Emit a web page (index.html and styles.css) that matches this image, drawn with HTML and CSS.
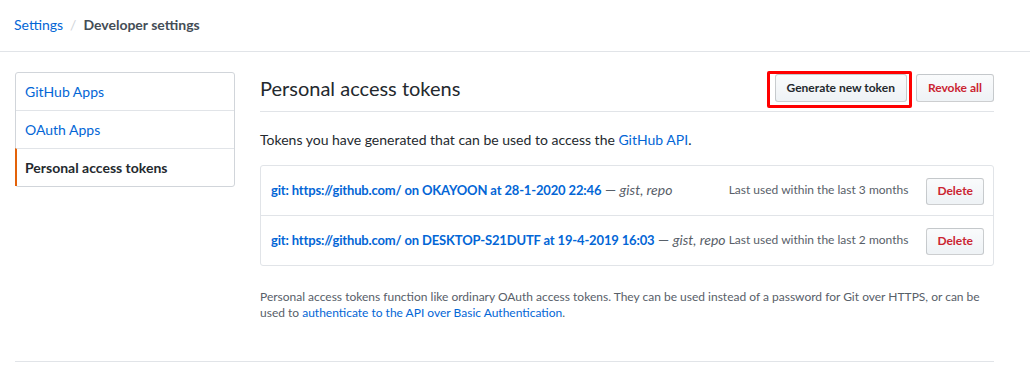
FILE: index.html
```html
<!DOCTYPE html>
<html lang="en">
<head>
    <meta charset="UTF-8">
    <meta name="viewport" content="width=device-width, initial-scale=1.0">
    <title>Personal access tokens</title>

    <link rel="stylesheet" href="styles.css">
</head>
<body>

    <div class="header">
        <a class="crumb" href="#">Settings</a>
        <span class="crumbSep">/</span>
        <span class="crumbCurrent">Developer settings</span>
    </div>

    <div class="layout">

        <nav class="sideMenu">
            <a class="menuItem" href="#">GitHub Apps</a>
            <a class="menuItem" href="#">OAuth Apps</a>
            <a class="menuItem selected" href="#">Personal access tokens</a>
        </nav>

        <div class="content">

            <div class="subhead">
                <h2 class="subheadTitle">Personal access tokens</h2>
                <div class="subheadActions">
                    <span class="highlight">
                        <a class="btn" href="#">Generate new token</a>
                    </span>
                    <a class="btn btnDanger" href="#">Revoke all</a>
                </div>
            </div>

            <p class="intro">Tokens you have generated that can be used to access the <a href="#">GitHub API</a>.</p>

            <div class="tokenList">
                <div class="tokenRow">
                    <div class="tokenDesc">
                        <a class="tokenName" href="#">git: https://github.com/ on OKAYOON at 28-1-2020 22:46</a>
                        <span class="tokenScopes">&mdash; <em>gist, repo</em></span>
                    </div>
                    <span class="lastUsed">Last used within the last 3 months</span>
                    <a class="btn btnSmall btnDanger" href="#">Delete</a>
                </div>
                <div class="tokenRow">
                    <div class="tokenDesc">
                        <a class="tokenName" href="#">git: https://github.com/ on DESKTOP-S21DUTF at 19-4-2019 16:03</a>
                        <span class="tokenScopes">&mdash; <em>gist, repo</em></span>
                    </div>
                    <span class="lastUsed">Last used within the last 2 months</span>
                    <a class="btn btnSmall btnDanger" href="#">Delete</a>
                </div>
            </div>

            <p class="note">Personal access tokens function like ordinary OAuth access tokens. They can be used instead of a password for Git over HTTPS, or can be used to <a href="#">authenticate to the API over Basic Authentication</a>.</p>

        </div>
    </div>

    <div class="footer"></div>

</body>
</html>
```

FILE: styles.css
```css
*{
    box-sizing: border-box;
    margin: 0;
    padding: 0;
}

body{
    font-family: Lato, "Liberation Sans", sans-serif;
    font-size: 14px;
    line-height: 1.5;
    color: #24292e;
    background: #fff;
}

a{
    color: #0366d6;
    text-decoration: none;
}

.header{
    display: flex;
    align-items: center;
    gap: 7px;
    height: 52px;
    padding: 0 14px 2px;
    border-bottom: 1px solid #e1e4e8;
    font-size: 14px;
}

.crumbSep{
    color: #d1d5da;
}

.crumbCurrent{
    color: #444d56;
    font-weight: 700;
}

.layout{
    display: flex;
    align-items: flex-start;
    gap: 25px;
    padding: 20px 0 0 15px;
}

.sideMenu{
    display: flex;
    flex-direction: column;
    width: 220px;
    border: 1px solid #d1d5da;
    border-radius: 3px;
}

.menuItem{
    display: flex;
    align-items: center;
    height: 38px;
    padding-left: 9px;
    border-top: 1px solid #e1e4e8;
}

.menuItem:first-child{
    border-top: 0;
    height: 37px;
}

.menuItem.selected{
    color: #24292e;
    font-weight: 700;
    border-left: 2px solid #e36209;
    margin-left: -1px;
    padding-left: 8px;
}

.content{
    width: 734px;
}

.subhead{
    display: flex;
    align-items: center;
    justify-content: space-between;
    padding: 1px 0 9px;
    border-bottom: 1px solid #e1e4e8;
}

.subheadTitle{
    font-size: 20px;
    font-weight: 400;
    line-height: 28px;
    padding-top: 1px;
}

.subheadActions{
    display: flex;
    align-items: center;
    gap: 9px;
}

.highlight{
    position: relative;
    display: flex;
}

.highlight::after{
    content: "";
    position: absolute;
    left: -8px;
    top: -3px;
    right: -5px;
    bottom: -6px;
    border: 3px solid #f00;
    border-radius: 2px;
}

.btn{
    display: inline-flex;
    align-items: center;
    height: 28px;
    padding: 0 11px;
    font-size: 12px;
    font-weight: 700;
    color: #24292e;
    background: linear-gradient(#fafbfc, #eff3f6 90%);
    border: 1px solid rgba(27, 31, 35, 0.2);
    border-radius: 3px;
}

.btnDanger{
    color: #cb2431;
}

.btnSmall{
    height: 27px;
    padding: 0 10px;
}

.intro{
    margin: 17px 0 15px;
}

.tokenList{
    border: 1px solid #e1e4e8;
    border-radius: 3px;
}

.tokenRow{
    display: flex;
    align-items: center;
    height: 50px;
    padding: 1px 9px 0 10px;
    border-top: 1px solid #e1e4e8;
}

.tokenRow:first-child{
    border-top: 0;
    height: 49px;
}

.tokenDesc{
    flex: 1;
    min-width: 0;
    margin-top: -2px;
    white-space: nowrap;
}

.tokenName{
    font-size: 13px;
    font-weight: 700;
    letter-spacing: -0.15px;
}

.tokenScopes{
    color: #586069;
}

.lastUsed{
    flex-shrink: 0;
    margin: -2px 18px 0 5px;
    font-size: 12px;
    white-space: nowrap;
    color: #586069;
}

.note{
    margin-top: 23px;
    font-size: 12px;
    line-height: 16px;
    color: #586069;
}

.footer{
    margin: 40px 36px 0 15px;
    border-top: 1px solid #e1e4e8;
}
```
